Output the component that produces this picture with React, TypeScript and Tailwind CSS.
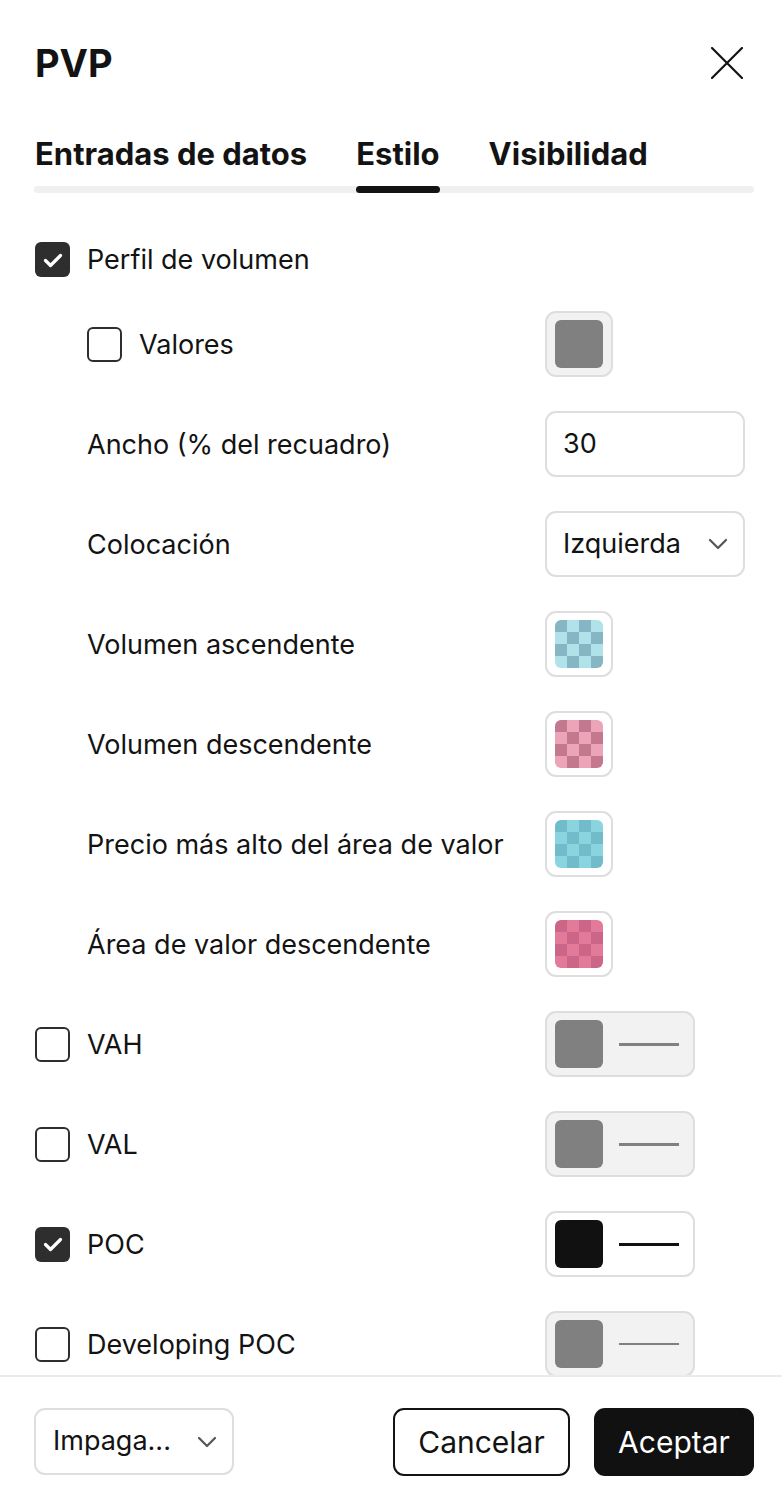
import React from "react";

const font = { fontFamily: "Inter, 'Noto Sans', sans-serif" };

function Checkbox({ checked }: { checked?: boolean }) {
  return checked ? (
    <div className="w-[35px] h-[35px] rounded-[6px] bg-[#2e2e2e] flex items-center justify-center shrink-0">
      <svg width="22" height="22" viewBox="0 0 22 22" fill="none">
        <path d="M3.5 11.5l5 5L18.5 6.5" stroke="white" strokeWidth="3.2" strokeLinecap="round" strokeLinejoin="round" />
      </svg>
    </div>
  ) : (
    <div className="w-[35px] h-[35px] rounded-[6px] border-2 border-[#2e2e2e] bg-white shrink-0" />
  );
}

function Chevron() {
  return (
    <svg width="26" height="26" viewBox="0 0 26 26" fill="none">
      <path d="M5 9l8 8 8-8" stroke="#555" strokeWidth="2.2" strokeLinecap="round" strokeLinejoin="round" />
    </svg>
  );
}

function Checker({ a, b }: { a: string; b: string }) {
  const cells = Array.from({ length: 16 }, (_, i) => {
    const r = Math.floor(i / 4);
    const c = i % 4;
    return (r + c) % 2 === 0 ? a : b;
  });
  return (
    <div className="w-[48px] h-[48px] rounded-[6px] overflow-hidden grid grid-cols-4 grid-rows-4">
      {cells.map((col, i) => (
        <div key={i} style={{ backgroundColor: col }} />
      ))}
    </div>
  );
}

function Swatch({ children, disabled }: { children: React.ReactNode; disabled?: boolean }) {
  return (
    <div
      className={`w-[68px] h-[66px] rounded-[11px] border-2 border-[#dedede] flex items-center justify-center ${
        disabled ? "bg-[#f2f2f2]" : "bg-white"
      }`}
    >
      {children}
    </div>
  );
}

function LineSwatch({ color, disabled, thin }: { color: string; disabled?: boolean; thin?: boolean }) {
  return (
    <div
      className={`w-[150px] h-[66px] rounded-[11px] border-2 border-[#dedede] flex items-center pl-[8px] gap-[16px] ${
        disabled ? "bg-[#f2f2f2]" : "bg-white"
      }`}
    >
      <div className="w-[48px] h-[48px] rounded-[6px]" style={{ backgroundColor: color }} />
      <div className={`w-[60px] ${thin ? "h-[2px]" : "h-[3px]"}`} style={{ backgroundColor: color }} />
    </div>
  );
}

function Row({
  label,
  indent,
  check,
  control,
}: {
  label: string;
  indent?: boolean;
  check?: "on" | "off";
  control?: React.ReactNode;
}) {
  return (
    <div className="h-[66px] flex items-center">
      <div className={`flex items-center gap-[17px] w-[510px] ${indent ? "pl-[52px]" : ""}`}>
        {check && <Checkbox checked={check === "on"} />}
        <span className="text-[27px] text-[#131313] leading-none">{label}</span>
      </div>
      {control}
    </div>
  );
}

export default function App() {
  const tabs = ["Entradas de datos", "Estilo", "Visibilidad"];
  return (
    <div className="w-[782px] h-[1500px] bg-white flex flex-col overflow-hidden" style={font}>
      {/* header */}
      <div className="h-[134px] pl-[35px] pr-[28px] pt-[40px] flex justify-between items-start shrink-0">
        <h1 className="text-[38px] font-bold text-[#131313] leading-[46px]">PVP</h1>
        <svg width="32" height="32" viewBox="0 0 32 32" className="mt-[7px] mr-[11px]">
          <path d="M1 1l30 30M31 1L1 31" stroke="#131313" strokeWidth="2.2" strokeLinecap="round" />
        </svg>
      </div>

      {/* tabs */}
      <div className="pl-[34px] pr-[28px] shrink-0">
        <div className="flex gap-[49px] pl-[1px]">
          {tabs.map((t) => (
            <div key={t} className="flex flex-col">
              <span className="text-[31px] font-bold text-[#131313] leading-[36px] h-[52px] pt-[2px]">{t}</span>
              <div className={`h-[7px] rounded-full ${t === "Estilo" ? "bg-[#131313]" : ""}`} />
            </div>
          ))}
        </div>
        <div className="h-[7px] rounded-full bg-[#f0f0f0] -mt-[7px]" />
      </div>

      {/* content */}
      <div className="flex-1 overflow-hidden px-[35px] pt-[49px]">
        <div className="flex flex-col gap-[34px]">
          <div className="h-[35px] flex items-center gap-[17px]">
            <Checkbox checked />
            <span className="text-[27px] text-[#131313] leading-none">Perfil de volumen</span>
          </div>
          <Row
            label="Valores"
            indent
            check="off"
            control={
              <Swatch disabled>
                <div className="w-[48px] h-[48px] rounded-[6px] bg-[#808080]" />
              </Swatch>
            }
          />
          <Row
            label="Ancho (% del recuadro)"
            indent
            control={
              <div className="w-[200px] h-[66px] rounded-[11px] border-2 border-[#dedede] flex items-center px-[16px] text-[27px] text-[#131313]">
                30
              </div>
            }
          />
          <Row
            label="Colocación"
            indent
            control={
              <div className="w-[200px] h-[66px] rounded-[11px] border-2 border-[#dedede] flex items-center justify-between pl-[16px] pr-[12px] text-[27px] text-[#131313]">
                <span>Izquierda</span>
                <Chevron />
              </div>
            }
          />
          <Row
            label="Volumen ascendente"
            indent
            control={
              <Swatch>
                <Checker a="#86b6c4" b="#b0e2ea" />
              </Swatch>
            }
          />
          <Row
            label="Volumen descendente"
            indent
            control={
              <Swatch>
                <Checker a="#c47890" b="#eca4b8" />
              </Swatch>
            }
          />
          <Row
            label="Precio más alto del área de valor"
            indent
            control={
              <Swatch>
                <Checker a="#70bccb" b="#8ad4e0" />
              </Swatch>
            }
          />
          <Row
            label="Área de valor descendente"
            indent
            control={
              <Swatch>
                <Checker a="#cc6688" b="#e47a9a" />
              </Swatch>
            }
          />
          <Row label="VAH" check="off" control={<LineSwatch color="#808080" disabled />} />
          <Row label="VAL" check="off" control={<LineSwatch color="#808080" disabled />} />
          <Row label="POC" check="on" control={<LineSwatch color="#111111" />} />
          <Row label="Developing POC" check="off" control={<LineSwatch color="#808080" disabled thin />} />
        </div>
      </div>

      {/* footer */}
      <div className="h-[125px] shrink-0 border-t-2 border-[#ebebeb] pl-[34px] pr-[28px] pt-[31px] flex items-start justify-between">
        <div className="w-[200px] h-[67px] rounded-[11px] border-2 border-[#dedede] flex items-center justify-between pl-[17px] pr-[12px] text-[27px] text-[#131313]">
          <span>Impaga...</span>
          <Chevron />
        </div>
        <div className="flex gap-[24px]">
          <button className="w-[177px] h-[68px] rounded-[11px] border-2 border-[#131313] bg-white text-[30px] text-[#131313]">
            Cancelar
          </button>
          <button className="w-[160px] h-[68px] rounded-[11px] bg-[#111111] text-[30px] text-white">Aceptar</button>
        </div>
      </div>
    </div>
  );
}
